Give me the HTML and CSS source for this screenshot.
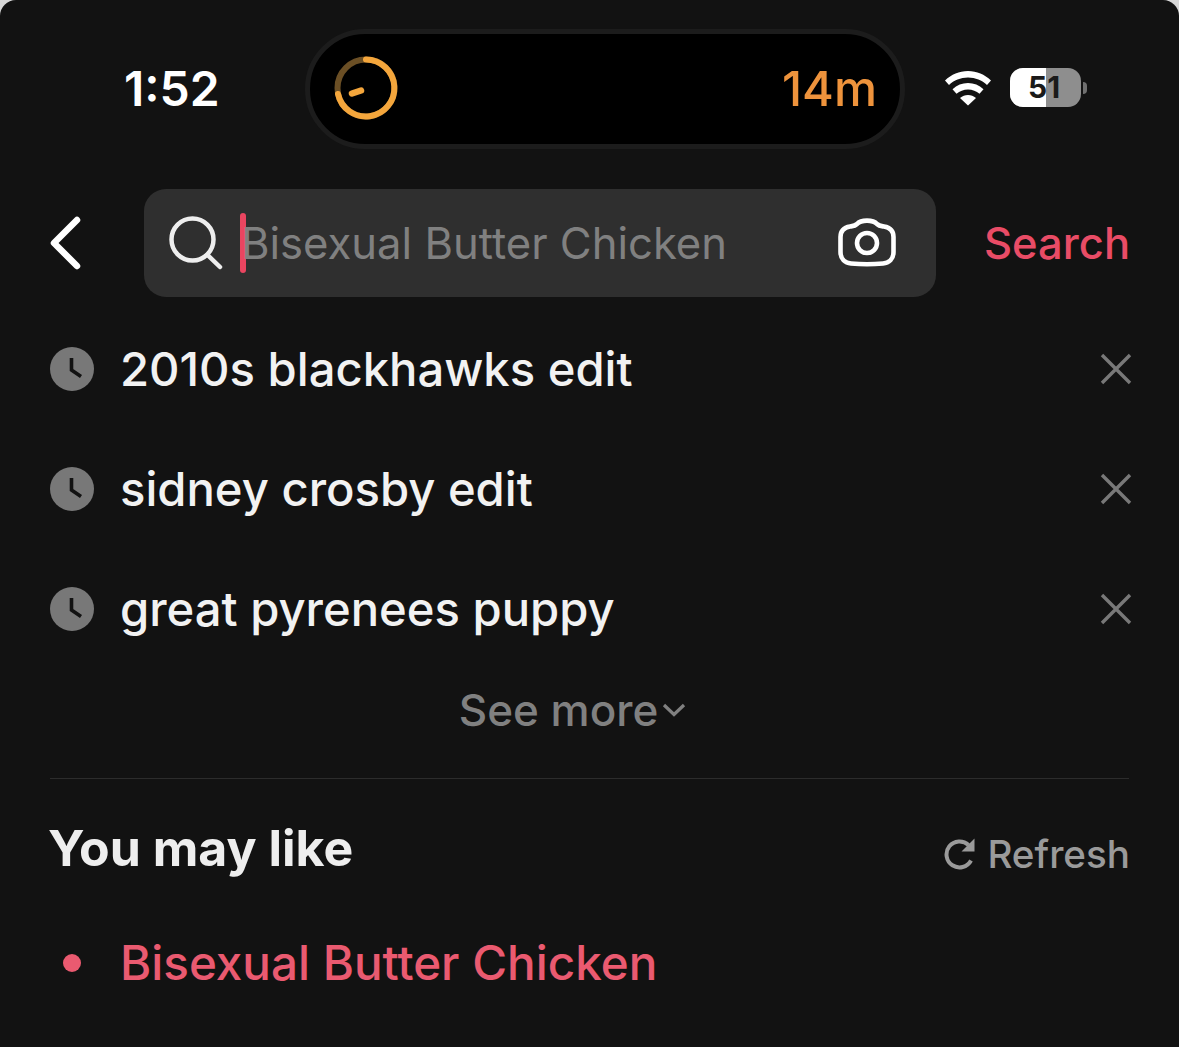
FILE: index.html
```html
<!DOCTYPE html>
<html lang="en">
<head>
    <meta charset="UTF-8">
    <meta name="viewport" content="width=device-width, initial-scale=1.0">
    <title>Search</title>
    <link rel="stylesheet" href="styles.css">
</head>
<body>
<div class="screen">
    <div class="status-bar">
        <div class="time">1:52</div>
        <div class="island">
            <svg class="timer" width="66" height="66" viewBox="0 0 66 66" fill="none">
                <circle cx="33" cy="33" r="28.5" stroke="#6b4f25" stroke-width="6"/>
                <path d="M33 4.5A28.5 28.5 0 1 1 5 39" stroke="#f4a63c" stroke-width="6" stroke-linecap="round"/>
                <path d="M19 38.5L28 35.5" stroke="#f4a63c" stroke-width="6.5" stroke-linecap="round"/>
            </svg>
            <span class="timer-label">14m</span>
        </div>
        <div class="status-icons">
            <svg width="48" height="36" viewBox="0 0 48 36" fill="#fff">
                <path d="M24 1C15 1 7.500 4.500 1 10.500L5 15C10 10.300 16.500 7.500 24 7.500S38 10.300 43 15L47 10.500C40.500 4.500 33 1 24 1Z"/>
                <path d="M24 13C18 13 13 15.200 8.500 19.300L12.500 23.800C15.700 21 19.500 19.400 24 19.400S32.300 21 35.500 23.800L39.500 19.300C35 15.200 30 13 24 13Z"/>
                <path d="M24 25C21 25 18.500 26 16 28L24 35.500L32 28C29.500 26 27 25 24 25Z"/>
            </svg>
            <div class="battery">
                <div class="battery-fill"></div>
                <span class="battery-level">51</span>
            </div>
            <div class="battery-cap"></div>
        </div>
    </div>

    <div class="search-row">
        <svg class="back" width="34" height="54" viewBox="0 0 34 54" fill="none">
            <path d="M29 4L6 27L29 50" stroke="#fff" stroke-width="6.500" stroke-linecap="round" stroke-linejoin="round"/>
        </svg>
        <div class="search-box">
            <svg class="search-icon" width="54" height="54" viewBox="0 0 54 54" fill="none">
                <circle cx="23.500" cy="23.500" r="21" stroke="#eee" stroke-width="4.500"/>
                <path d="M38.500 39L51 51" stroke="#eee" stroke-width="4.500" stroke-linecap="round"/>
            </svg>
            <div class="caret"></div>
            <span class="placeholder">Bisexual Butter Chicken</span>
            <svg class="camera" width="58" height="50" viewBox="0 0 58 50" fill="none">
                <path d="M19 7C23 2.500 35 2.500 39 7C41 9 42.500 9 46 9.500C52 10.500 55.500 14 55.500 20V35C55.500 42 51 46 45 46.500C35 47.500 23 47.500 13 46.500C7 46 2.500 42 2.500 35V20C2.500 14 6 10.500 12 9.500C15.500 9 17 9 19 7Z" stroke="#fff" stroke-width="4.600"/>
                <circle cx="29" cy="26" r="10" stroke="#fff" stroke-width="4.600"/>
            </svg>
        </div>
        <span class="search-btn">Search</span>
    </div>

    <ul class="history">
        <li class="history-row">
            <svg class="clock" width="44" height="44" viewBox="0 0 44 44">
                <circle cx="22" cy="22" r="22" fill="#787878"/>
                <path d="M21.500 11V23L31 29.500" fill="none" stroke="#121212" stroke-width="3.600"/>
            </svg>
            <span class="history-text">2010s blackhawks edit</span>
            <svg class="remove" width="32" height="32" viewBox="0 0 32 32">
                <path d="M2 2L30 30M30 2L2 30" stroke="#787878" stroke-width="3.400"/>
            </svg>
        </li>
        <li class="history-row">
            <svg class="clock" width="44" height="44" viewBox="0 0 44 44">
                <circle cx="22" cy="22" r="22" fill="#787878"/>
                <path d="M21.500 11V23L31 29.500" fill="none" stroke="#121212" stroke-width="3.600"/>
            </svg>
            <span class="history-text">sidney crosby edit</span>
            <svg class="remove" width="32" height="32" viewBox="0 0 32 32">
                <path d="M2 2L30 30M30 2L2 30" stroke="#787878" stroke-width="3.400"/>
            </svg>
        </li>
        <li class="history-row">
            <svg class="clock" width="44" height="44" viewBox="0 0 44 44">
                <circle cx="22" cy="22" r="22" fill="#787878"/>
                <path d="M21.500 11V23L31 29.500" fill="none" stroke="#121212" stroke-width="3.600"/>
            </svg>
            <span class="history-text">great pyrenees puppy</span>
            <svg class="remove" width="32" height="32" viewBox="0 0 32 32">
                <path d="M2 2L30 30M30 2L2 30" stroke="#787878" stroke-width="3.400"/>
            </svg>
        </li>
    </ul>

    <div class="see-more">
        <span>See more</span>
        <svg width="24" height="14" viewBox="0 0 24 14" fill="none">
            <path d="M2 2L12 11.500L22 2" stroke="#808080" stroke-width="3.200"/>
        </svg>
    </div>

    <div class="divider"></div>

    <div class="like-header">
        <h2>You may like</h2>
        <div class="refresh">
            <svg width="32" height="34" viewBox="0 0 32 34" fill="none">
                <path d="M27 23.500A13 13 0 1 1 24.500 8" stroke="#9a9a9a" stroke-width="4"/>
                <path d="M30.500 1.500V14.500H17.500Z" fill="#9a9a9a"/>
            </svg>
            <span>Refresh</span>
        </div>
    </div>

    <div class="trend-row">
        <div class="dot"></div>
        <span>Bisexual Butter Chicken</span>
    </div>
</div>
</body>
</html>
```

FILE: styles.css
```css
* {
    box-sizing: border-box;
}
html {
    background-color: #d8d8d8;
}
body {
    margin: 0;
    font-family: Inter, "Liberation Sans", sans-serif;
}
.screen {
    height: 1047px;
    overflow: hidden;
    background-color: #121212;
    border-radius: 16px 16px 0 0;
    padding: 29px 50px 0;
}
.status-bar {
    display: flex;
    align-items: center;
    height: 120px;
}
.time {
    width: 255px;
    padding-left: 74px;
    margin-top: -2px;
    color: #fff;
    font-size: 48px;
    font-weight: 600;
}
.island {
    display: flex;
    align-items: center;
    justify-content: space-between;
    width: 600px;
    height: 120px;
    padding: 0 23px;
    background-color: #000;
    border: 5px solid #1c1c1c;
    border-radius: 60px;
}
.timer {
    margin-top: -2px;
}
.timer-label {
    margin-top: -2px;
    color: #ee933c;
    font-size: 48.5px;
    font-weight: 500;
}
.status-icons {
    display: flex;
    align-items: center;
    margin-left: 39px;
    margin-top: -3px;
}
.battery {
    position: relative;
    width: 71px;
    height: 39px;
    margin-left: 18px;
    background-color: #8e8e8e;
    border-radius: 13px;
    overflow: hidden;
}
.battery-fill {
    width: 36px;
    height: 100%;
    background-color: #fff;
}
.battery-level {
    position: absolute;
    left: 18px;
    top: 3px;
    color: #1a1a1a;
    font-size: 30px;
    line-height: 33px;
    font-weight: 700;
}
.battery-cap {
    width: 4px;
    height: 12px;
    margin-left: 2px;
    background-color: #707070;
    border-radius: 0 6px 6px 0;
}
.search-row {
    display: flex;
    align-items: center;
    margin-top: 40px;
}
.back {
    flex: none;
    margin-left: -2px;
    margin-right: 62px;
}
.search-box {
    display: flex;
    align-items: center;
    flex: none;
    width: 792px;
    height: 108px;
    padding: 0 40px 0 25px;
    background-color: #2f2f2f;
    border-radius: 22px;
}
.caret {
    width: 6px;
    height: 60px;
    margin-left: 17px;
    background-color: #ea4560;
    border-radius: 3px;
}
.placeholder {
    flex: 1;
    margin-left: -5px;
    color: #808080;
    font-size: 43.6px;
}
.camera {
    margin-top: -2px;
}
.search-btn {
    margin-left: 48px;
    margin-top: -1px;
    color: #e94c66;
    font-size: 43.5px;
    font-weight: 500;
}
.history {
    list-style: none;
    margin: 12px 0 0;
    padding: 0;
}
.history-row {
    display: flex;
    align-items: center;
    height: 120px;
}
.history-text {
    flex: 1;
    margin-left: 26px;
    margin-top: -2px;
    color: #f2f2f2;
    font-size: 47.2px;
    font-weight: 500;
}
.remove {
    margin-right: -3px;
}
.see-more {
    display: flex;
    align-items: center;
    justify-content: center;
    gap: 4px;
    height: 82px;
    margin-left: -34px;
    color: #808080;
    font-size: 44px;
    font-weight: 500;
}
.divider {
    height: 1px;
    margin-top: 27px;
    background-color: #2c2c2c;
}
.like-header {
    display: flex;
    align-items: center;
    justify-content: space-between;
    height: 144px;
}
.like-header h2 {
    margin: 0 0 6px -2px;
    color: #eee;
    font-size: 50px;
    font-weight: 700;
}
.refresh {
    display: flex;
    align-items: center;
    gap: 11px;
    margin-top: 6px;
    margin-right: -1px;
    color: #9a9a9a;
    font-size: 38.6px;
    font-weight: 500;
}
.trend-row {
    display: flex;
    align-items: center;
    margin-top: 11px;
    color: #ea5a70;
    font-size: 47.6px;
    font-weight: 500;
}
.dot {
    width: 18px;
    height: 18px;
    margin: 0 39px 0 13px;
    background-color: #ea5a70;
    border-radius: 50%;
}
```
